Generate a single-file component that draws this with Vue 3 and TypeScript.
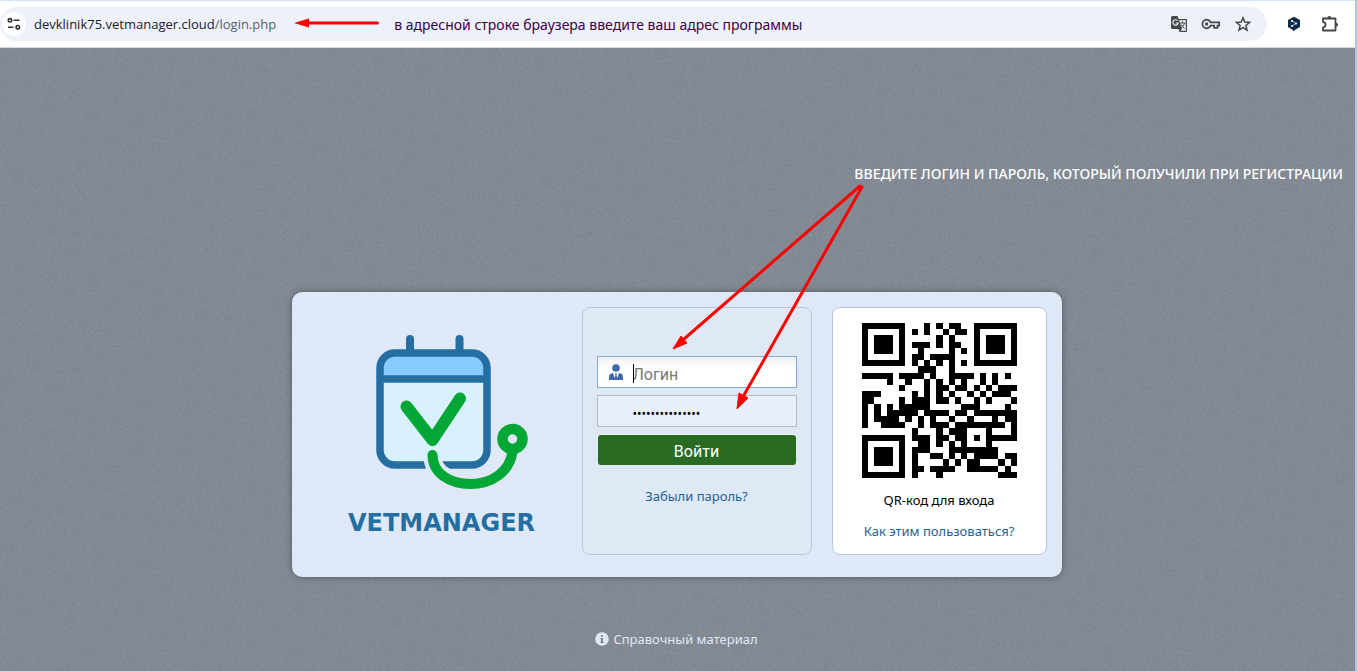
<script setup lang="ts">
import { computed, ref } from 'vue'

const login = ref('')
const password = ref('vetmanager12345')

const qrRows: string[] = [
  '1111111000101011001111111',
  '1000001010100101101000001',
  '1011101000001010001011101',
  '1011101011101011001011101',
  '1011101001000010101011101',
  '1000001011011110001000001',
  '1111111010101010101111111',
  '0000000001110010000000000',
  '1111101111010011110101010',
  '0000100100101010100101000',
  '0000001000101101101010111',
  '1110000010101010010101110',
  '1100001011101101001010001',
  '1010101111100000111000010',
  '1010111110111101101111111',
  '1011110101010010010001011',
  '1001111001011101111111101',
  '0000000010001011100010001',
  '1111111011101101101011111',
  '1000001001101010100010000',
  '1011101011100011111111000',
  '1011101010011010101111011',
  '1011101010000101011000101',
  '1000001011011110011111010',
  '1111111010001000000000111',
]

const qrPath = computed(() =>
  qrRows
    .flatMap((row, y) => [...row].map((bit, x) => (bit === '1' ? `M${x} ${y}h1v1h-1z` : '')))
    .join(''),
)
</script>

<template>
  <div class="window">
    <header class="toolbar">
      <div class="omnibox">
        <button class="site-info" type="button" aria-label="Сведения о сайте">
          <svg width="14" height="14" viewBox="0 0 14 14" fill="none" stroke="#303236" stroke-width="1.6">
            <circle cx="3" cy="3.3" r="1.7" />
            <path d="M6.5 3.3h6M1 10.2h5.5" />
            <circle cx="10.8" cy="10.2" r="1.7" />
          </svg>
        </button>
        <div class="url">devklinik75.vetmanager.cloud<span class="path">/login.php</span></div>
        <svg class="url-arrow" width="86" height="12" viewBox="0 0 86 12">
          <path d="M12 5H83.5" stroke="#fe0000" stroke-width="3" stroke-linecap="round" />
          <path d="M0 5L15 .5V9.500z" fill="#fe0000" />
        </svg>
        <p class="url-note">в адресной строке браузера введите ваш адрес программы</p>
        <div class="actions">
          <button type="button" aria-label="Перевести">
            <svg width="18" height="18" viewBox="0 0 18 18">
              <path d="M2.5 1h5l1 3h7.500a1 1 0 0 1 1 1v11a1 1 0 0 1-1 1H9.500l-1-3h-6a1.500 1.500 0 0 1-1.500-1.500v-10A1.500 1.500 0 0 1 2.500 1z" fill="#474747" />
              <path d="M9 5.200h6.800v10.600h-5.300l1.500-2z" fill="#ecf1fa" />
              <path d="M7.600 5.700A2.700 2.700 0 1 0 8.200 8H5.700" fill="none" stroke="#ecf1fa" stroke-width="1.2" />
              <path d="M10 8h5.500M12.500 6.500V8M14.500 8c-.5 2.500-2 4-3.500 5M11.200 9.500c.7 1.800 2 3 3.500 4" fill="none" stroke="#474747" stroke-width="1" />
            </svg>
          </button>
          <button type="button" aria-label="Пароли">
            <svg width="20" height="12" viewBox="0 0 20 12" fill="none" stroke="#474747" stroke-width="1.7">
              <path d="M9.600 4.300A4.300 4.300 0 1 0 9.600 7.700h3.600v2.100h3.300V7.700h1.700V4.300z" />
              <circle cx="5.6" cy="6" r="1.7" fill="#474747" stroke="none" />
            </svg>
          </button>
          <button type="button" aria-label="Добавить в закладки">
            <svg width="16" height="16" viewBox="0 0 16 16" fill="none" stroke="#474747" stroke-width="1.5">
              <path d="M8 1.800l1.800 4.300 4.700.4-3.600 3 1.100 4.600L8 11.600l-4 2.500 1.100-4.600-3.600-3 4.700-.4z" />
            </svg>
          </button>
        </div>
      </div>
      <div class="extensions">
        <button type="button" aria-label="DeepL">
          <svg width="14" height="16" viewBox="0 0 14 16">
            <path d="M7 .8l6 3.300v7L7.800 14 7 15.500 5.800 14 1 11.100v-7z" fill="#0f2b46" />
            <path d="M5 5l4 2.500-4 2.600" fill="none" stroke="#9db1c6" stroke-width="1" />
            <circle cx="5" cy="5" r="1" fill="#fff" />
            <circle cx="9" cy="7.5" r="1" fill="#fff" />
            <circle cx="5" cy="10" r="1" fill="#fff" />
          </svg>
        </button>
        <button type="button" aria-label="Расширения">
          <svg width="18" height="18" viewBox="0 0 18 18">
            <path d="M2 3.500h12.500v12H2v-3.200a2.600 2.600 0 0 0 0-5.200z" fill="none" stroke="#474747" stroke-width="1.8" stroke-linejoin="round" />
            <path d="M6.300 3a2 2 0 0 1 4 0zM15 7.700a2 2 0 0 1 0 4z" fill="#474747" />
          </svg>
        </button>
      </div>
    </header>

    <main class="stage">
      <svg class="texture" width="100%" height="100%" aria-hidden="true">
        <filter id="weave" x="0" y="0" width="100%" height="100%">
          <feTurbulence type="fractalNoise" baseFrequency="0.5" numOctaves="2" seed="4" />
          <feColorMatrix values="0 0 0 0 0.1  0 0 0 0 0.12  0 0 0 0 0.16  1.2 0 0 0 -0.45" />
        </filter>
        <pattern id="hatch" width="46" height="46" patternUnits="userSpaceOnUse" patternTransform="rotate(8)">
          <path d="M0 8l8-8M0 12L12 0M0 16L16 0M2 18L18 2M6 18L18 6M24 24l14 14M28 24l12 12M24 28l12 12M32 24l10 10M24 32l9 9M26 0l12 12M30 0l10 10M0 28l12 12M0 32l10 10M4 28l10 10" stroke="#3b4658" stroke-opacity=".08" />
        </pattern>
        <rect width="100%" height="100%" filter="url(#weave)" opacity=".4" />
        <rect width="100%" height="100%" fill="url(#hatch)" />
      </svg>

      <section class="card">
        <div class="brand">
          <svg class="logo" width="154" height="156" viewBox="0 0 154 156">
            <path d="M34 5v15M83.5 5v15" stroke="#246ea2" stroke-width="8" stroke-linecap="round" />
            <rect x="4" y="19" width="107" height="112" rx="15" fill="#d9f0ff" />
            <path d="M4 45V34a15 15 0 0 1 15-15h77a15 15 0 0 1 15 15v11z" fill="#89caff" />
            <path d="M4 45h107" stroke="#246ea2" stroke-width="7.5" />
            <rect x="4" y="19" width="107" height="112" rx="15" fill="none" stroke="#246ea2" stroke-width="7.5" />
            <path d="M56.5 122c0 17 17 26.500 38 26.500" fill="none" stroke="#dfe8f6" stroke-width="18" />
            <path d="M56.500 116v11" stroke="#d9f0ff" stroke-width="17" />
            <path d="M30.500 72.500L56.500 106 84 64.500" fill="none" stroke="#02a736" stroke-width="12" stroke-linecap="round" stroke-linejoin="round" />
            <path d="M56.500 121c0 18 17 29 38 29s39-12 42-32" fill="none" stroke="#02a736" stroke-width="10" stroke-linecap="round" />
            <circle cx="136.5" cy="105" r="10" fill="#dfe8f6" stroke="#02a736" stroke-width="10.5" />
          </svg>
          <div class="brand-name">VETMANAGER</div>
        </div>

        <form class="panel login-panel" @submit.prevent>
          <div class="field">
            <svg class="user-icon" width="14" height="16" viewBox="0 0 14 16" fill="#4169a8">
              <circle cx="7" cy="4" r="3.8" />
              <path d="M0 16v-3c0-2.500 1.500-3.700 4-4l1.700 5L6.500 11 6 9.300h2L7.500 11l.8 3L10 9c2.500.3 4 1.500 4 4v3z" />
            </svg>
            <span class="caret"></span>
            <input v-model="login" class="login" type="text" placeholder="Логин" aria-label="Логин" />
          </div>
          <input v-model="password" class="password" type="password" aria-label="Пароль" />
          <button class="submit" type="submit">Войти</button>
          <a class="forgot" href="#">Забыли пароль?</a>
        </form>

        <div class="panel qr-panel">
          <svg class="qr" width="155" height="155" viewBox="0 0 25 25" shape-rendering="crispEdges" role="img" aria-label="QR-код">
            <path :d="qrPath" />
          </svg>
          <p>QR-код для входа</p>
          <a href="#">Как этим пользоваться?</a>
        </div>
      </section>

      <a class="help" href="#">
        <svg width="14" height="14" viewBox="0 0 14 14">
          <circle cx="7" cy="7" r="6.8" fill="#dfe8f6" />
          <path d="M6 3h2v1.800H6zM5.300 6H8v4h.8v1H5.300v-1H6V7h-.7z" fill="#7e858e" />
        </svg>
        <span>Справочный материал</span>
      </a>

      <p class="stage-note">ВВЕДИТЕ ЛОГИН И ПАРОЛЬ, КОТОРЫЙ ПОЛУЧИЛИ ПРИ РЕГИСТРАЦИИ</p>
      <svg class="pointers" width="200" height="240" viewBox="0 0 200 240">
        <path d="M12 156L188 3M190 4L72 212" fill="none" stroke="#fe0000" stroke-width="3" stroke-linecap="round" />
        <path d="M1 166L9 153 15 160z M65 226L67 210 76 215z" fill="#fe0000" stroke="#fe0000" stroke-width="1" />
      </svg>
    </main>
  </div>
</template>

<style>
body {
  margin: 0;
}
</style>

<style scoped>
* {
  box-sizing: border-box;
}

p {
  margin: 0;
}

a {
  color: #1c6496;
  text-decoration: none;
}

.window {
  display: flex;
  flex-direction: column;
  min-height: 100vh;
  border-right: 2px solid #b4c5dc;
  font-family: 'Noto Sans', sans-serif;
  font-size: 13px;
}

.toolbar {
  display: flex;
  align-items: center;
  height: 48px;
  border-top: 1px solid #d3e3fd;
  border-bottom: 1px solid #d5d9d8;
  background: #fff;
}

.toolbar button {
  display: flex;
  align-items: center;
  justify-content: center;
  padding: 0;
  border: 0;
  background: none;
}

.omnibox {
  display: flex;
  flex: 1;
  align-items: center;
  height: 34px;
  padding: 0 14px 0 2px;
  border-radius: 17px;
  background: #ecf1fa;
}

.toolbar .site-info {
  width: 24px;
  height: 24px;
  border-radius: 50%;
  background: #fff;
}

.url {
  margin-left: 8px;
  color: #1f2023;
  font-family: 'Open Sans', sans-serif;
  white-space: nowrap;
}

.path {
  color: #5b5e63;
}

.url-arrow {
  margin-left: 18px;
}

.url-note {
  margin-left: 14px;
  color: #42003f;
  font-size: 14px;
  white-space: nowrap;
}

.actions {
  display: flex;
  gap: 12px;
  margin-left: auto;
}

.actions button {
  width: 20px;
}

.extensions {
  display: flex;
  gap: 20px;
  padding: 0 16px 0 20px;
}

.stage {
  position: relative;
  display: flex;
  flex: 1;
  flex-direction: column;
  align-items: center;
  padding: 244px 18px 20px 16px;
  background: #868d96;
}

.texture {
  position: absolute;
  inset: 0;
}

.card {
  position: relative;
  display: grid;
  grid-template-columns: 290px 230px 20px 215px;
  padding: 15px 15px 22px 0;
  border-radius: 10px;
  background: #dfe8f6;
  box-shadow: 0 0 6px rgba(50, 55, 65, 0.6);
}

.brand {
  display: flex;
  flex-direction: column;
  align-items: center;
  padding: 27px 0 0 10px;
}

.logo {
  margin-left: 22px;
}

.brand-name {
  margin-top: 19px;
  color: #246ea2;
  font: bold 24px/28px 'DejaVu Sans', sans-serif;
}

.panel {
  display: flex;
  flex-direction: column;
  height: 248px;
  border: 1px solid #b9c6da;
  border-radius: 8px;
}

.login-panel {
  padding: 48px 14px 0;
  background: #dfe8f5;
}

.field {
  position: relative;
  margin-bottom: 7px;
}

.user-icon {
  position: absolute;
  top: 8px;
  left: 12px;
}

.caret {
  position: absolute;
  top: 8px;
  left: 36px;
  width: 1px;
  height: 19px;
  background: #000;
}

input {
  display: block;
  width: 100%;
  height: 32px;
  padding: 4px 8px 0 35px;
  border: 1px solid #b5b8c8;
  border-radius: 0;
  outline: 0;
  font: 16px Roboto, 'Noto Sans', sans-serif;
}

.login {
  border-color: #7eadd9;
  background: linear-gradient(#eef0f1, #fff 12px);
}

.login::placeholder {
  color: #777;
}

.password {
  background: #e8f0fe;
  font: 12px 'Noto Sans', sans-serif;
}

.submit {
  height: 30px;
  margin: 8px 1px 0;
  padding: 2px 0 0;
  border: 0;
  border-radius: 3px;
  background: #296b23;
  box-shadow: 0 -1px 0 #f2f6fb;
  color: #fff;
  font: 16px Roboto, 'Noto Sans', sans-serif;
}

.forgot {
  margin-top: 21px;
  line-height: 20px;
  text-align: center;
}

.qr-panel {
  grid-column: 4;
  align-items: center;
  padding-top: 15px;
  background: #fff;
  line-height: 20px;
}

.qr-panel p {
  margin: 12px 0 11px;
}

.help {
  position: relative;
  display: flex;
  gap: 4px;
  align-items: center;
  margin-top: 52px;
  color: #dfe8f6;
  line-height: 20px;
}

.stage-note {
  position: absolute;
  top: 116px;
  right: 12px;
  color: #fff;
  font-size: 14px;
  font-weight: 500;
  line-height: 20px;
}

.pointers {
  position: absolute;
  top: 135px;
  left: calc(50% - 6px);
}
</style>
